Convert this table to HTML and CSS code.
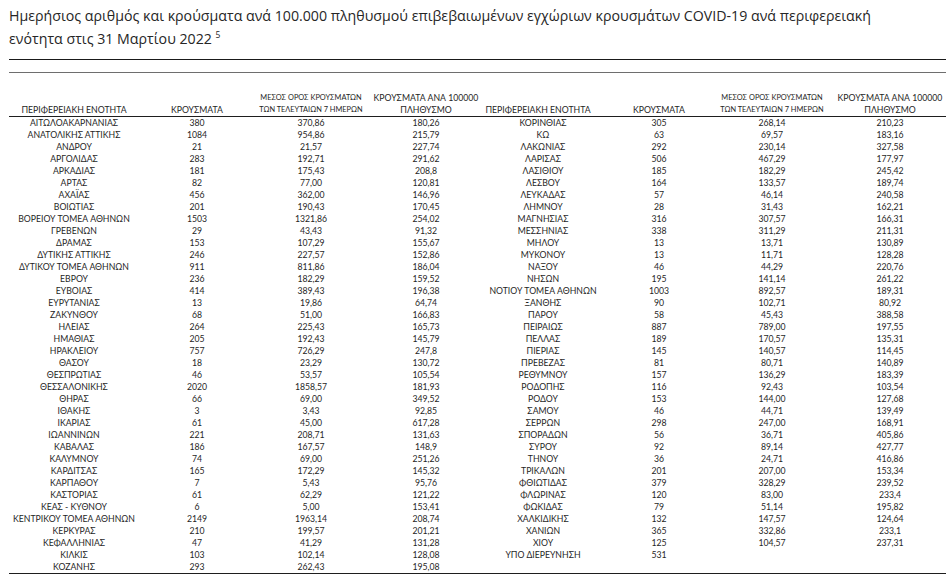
FILE: index.html
```html
<!DOCTYPE html>
<html lang="el">
<head>
<meta charset="utf-8">
<title>Κρούσματα ανά περιφερειακή ενότητα</title>
<link rel="stylesheet" href="styles.css">
</head>
<body>
<div class="page">
  <h1 class="title">Ημερήσιος αριθμός και κρούσματα ανά 100.000 πληθυσμού επιβεβαιωμένων εγχώριων κρουσμάτων COVID-19 ανά περιφερειακή<br>ενότητα στις 31 Μαρτίου 2022 <sup class="note">5</sup></h1>
  <div class="rule rule-dark"></div>
  <div class="rule rule-grey"></div>
  <table class="data">
    <colgroup>
      <col class="c1"><col class="c2"><col class="c3"><col class="c4">
      <col class="c5"><col class="c6"><col class="c7"><col class="c8">
    </colgroup>
    <thead>
      <tr>
        <th>ΠΕΡΙΦΕΡΕΙΑΚΗ ΕΝΟΤΗΤΑ</th>
        <th>ΚΡΟΥΣΜΑΤΑ</th>
        <th class="small">ΜΕΣΟΣ ΟΡΟΣ ΚΡΟΥΣΜΑΤΩΝ<br>ΤΩΝ ΤΕΛΕΥΤΑΙΩΝ 7 ΗΜΕΡΩΝ</th>
        <th>ΚΡΟΥΣΜΑΤΑ ΑΝΑ 100000<br>ΠΛΗΘΥΣΜΟ</th>
        <th class="name2">ΠΕΡΙΦΕΡΕΙΑΚΗ ΕΝΟΤΗΤΑ</th>
        <th>ΚΡΟΥΣΜΑΤΑ</th>
        <th class="small">ΜΕΣΟΣ ΟΡΟΣ ΚΡΟΥΣΜΑΤΩΝ<br>ΤΩΝ ΤΕΛΕΥΤΑΙΩΝ 7 ΗΜΕΡΩΝ</th>
        <th class="last">ΚΡΟΥΣΜΑΤΑ ΑΝΑ 100000<br>ΠΛΗΘΥΣΜΟ</th>
      </tr>
    </thead>
    <tbody>
      <tr><td>ΑΙΤΩΛΟΑΚΑΡΝΑΝΙΑΣ</td><td>380</td><td>370,86</td><td>180,26</td><td>ΚΟΡΙΝΘΙΑΣ</td><td>305</td><td>268,14</td><td class="last">210,23</td></tr>
      <tr><td>ΑΝΑΤΟΛΙΚΗΣ ΑΤΤΙΚΗΣ</td><td>1084</td><td>954,86</td><td>215,79</td><td>ΚΩ</td><td>63</td><td>69,57</td><td class="last">183,16</td></tr>
      <tr><td>ΑΝΔΡΟΥ</td><td>21</td><td>21,57</td><td>227,74</td><td>ΛΑΚΩΝΙΑΣ</td><td>292</td><td>230,14</td><td class="last">327,58</td></tr>
      <tr><td>ΑΡΓΟΛΙΔΑΣ</td><td>283</td><td>192,71</td><td>291,62</td><td>ΛΑΡΙΣΑΣ</td><td>506</td><td>467,29</td><td class="last">177,97</td></tr>
      <tr><td>ΑΡΚΑΔΙΑΣ</td><td>181</td><td>175,43</td><td>208,8</td><td>ΛΑΣΙΘΙΟΥ</td><td>185</td><td>182,29</td><td class="last">245,42</td></tr>
      <tr><td>ΑΡΤΑΣ</td><td>82</td><td>77,00</td><td>120,81</td><td>ΛΕΣΒΟΥ</td><td>164</td><td>133,57</td><td class="last">189,74</td></tr>
      <tr><td>ΑΧΑΪΑΣ</td><td>456</td><td>362,00</td><td>146,96</td><td>ΛΕΥΚΑΔΑΣ</td><td>57</td><td>46,14</td><td class="last">240,58</td></tr>
      <tr><td>ΒΟΙΩΤΙΑΣ</td><td>201</td><td>190,43</td><td>170,45</td><td>ΛΗΜΝΟΥ</td><td>28</td><td>31,43</td><td class="last">162,21</td></tr>
      <tr><td>ΒΟΡΕΙΟΥ ΤΟΜΕΑ ΑΘΗΝΩΝ</td><td>1503</td><td>1321,86</td><td>254,02</td><td>ΜΑΓΝΗΣΙΑΣ</td><td>316</td><td>307,57</td><td class="last">166,31</td></tr>
      <tr><td>ΓΡΕΒΕΝΩΝ</td><td>29</td><td>43,43</td><td>91,32</td><td>ΜΕΣΣΗΝΙΑΣ</td><td>338</td><td>311,29</td><td class="last">211,31</td></tr>
      <tr><td>ΔΡΑΜΑΣ</td><td>153</td><td>107,29</td><td>155,67</td><td>ΜΗΛΟΥ</td><td>13</td><td>13,71</td><td class="last">130,89</td></tr>
      <tr><td>ΔΥΤΙΚΗΣ ΑΤΤΙΚΗΣ</td><td>246</td><td>227,57</td><td>152,86</td><td>ΜΥΚΟΝΟΥ</td><td>13</td><td>11,71</td><td class="last">128,28</td></tr>
      <tr><td>ΔΥΤΙΚΟΥ ΤΟΜΕΑ ΑΘΗΝΩΝ</td><td>911</td><td>811,86</td><td>186,04</td><td>ΝΑΞΟΥ</td><td>46</td><td>44,29</td><td class="last">220,76</td></tr>
      <tr><td>ΕΒΡΟΥ</td><td>236</td><td>182,29</td><td>159,52</td><td>ΝΗΣΩΝ</td><td>195</td><td>141,14</td><td class="last">261,22</td></tr>
      <tr><td>ΕΥΒΟΙΑΣ</td><td>414</td><td>389,43</td><td>196,38</td><td>ΝΟΤΙΟΥ ΤΟΜΕΑ ΑΘΗΝΩΝ</td><td>1003</td><td>892,57</td><td class="last">189,31</td></tr>
      <tr><td>ΕΥΡΥΤΑΝΙΑΣ</td><td>13</td><td>19,86</td><td>64,74</td><td>ΞΑΝΘΗΣ</td><td>90</td><td>102,71</td><td class="last">80,92</td></tr>
      <tr><td>ΖΑΚΥΝΘΟΥ</td><td>68</td><td>51,00</td><td>166,83</td><td>ΠΑΡΟΥ</td><td>58</td><td>45,43</td><td class="last">388,58</td></tr>
      <tr><td>ΗΛΕΙΑΣ</td><td>264</td><td>225,43</td><td>165,73</td><td>ΠΕΙΡΑΙΩΣ</td><td>887</td><td>789,00</td><td class="last">197,55</td></tr>
      <tr><td>ΗΜΑΘΙΑΣ</td><td>205</td><td>192,43</td><td>145,79</td><td>ΠΕΛΛΑΣ</td><td>189</td><td>170,57</td><td class="last">135,31</td></tr>
      <tr><td>ΗΡΑΚΛΕΙΟΥ</td><td>757</td><td>726,29</td><td>247,8</td><td>ΠΙΕΡΙΑΣ</td><td>145</td><td>140,57</td><td class="last">114,45</td></tr>
      <tr><td>ΘΑΣΟΥ</td><td>18</td><td>23,29</td><td>130,72</td><td>ΠΡΕΒΕΖΑΣ</td><td>81</td><td>80,71</td><td class="last">140,89</td></tr>
      <tr><td>ΘΕΣΠΡΩΤΙΑΣ</td><td>46</td><td>53,57</td><td>105,54</td><td>ΡΕΘΥΜΝΟΥ</td><td>157</td><td>136,29</td><td class="last">183,39</td></tr>
      <tr><td>ΘΕΣΣΑΛΟΝΙΚΗΣ</td><td>2020</td><td>1858,57</td><td>181,93</td><td>ΡΟΔΟΠΗΣ</td><td>116</td><td>92,43</td><td class="last">103,54</td></tr>
      <tr><td>ΘΗΡΑΣ</td><td>66</td><td>69,00</td><td>349,52</td><td>ΡΟΔΟΥ</td><td>153</td><td>144,00</td><td class="last">127,68</td></tr>
      <tr><td>ΙΘΑΚΗΣ</td><td>3</td><td>3,43</td><td>92,85</td><td>ΣΑΜΟΥ</td><td>46</td><td>44,71</td><td class="last">139,49</td></tr>
      <tr><td>ΙΚΑΡΙΑΣ</td><td>61</td><td>45,00</td><td>617,28</td><td>ΣΕΡΡΩΝ</td><td>298</td><td>247,00</td><td class="last">168,91</td></tr>
      <tr><td>ΙΩΑΝΝΙΝΩΝ</td><td>221</td><td>208,71</td><td>131,63</td><td>ΣΠΟΡΑΔΩΝ</td><td>56</td><td>36,71</td><td class="last">405,86</td></tr>
      <tr><td>ΚΑΒΑΛΑΣ</td><td>186</td><td>167,57</td><td>148,9</td><td>ΣΥΡΟΥ</td><td>92</td><td>89,14</td><td class="last">427,77</td></tr>
      <tr><td>ΚΑΛΥΜΝΟΥ</td><td>74</td><td>69,00</td><td>251,26</td><td>ΤΗΝΟΥ</td><td>36</td><td>24,71</td><td class="last">416,86</td></tr>
      <tr><td>ΚΑΡΔΙΤΣΑΣ</td><td>165</td><td>172,29</td><td>145,32</td><td>ΤΡΙΚΑΛΩΝ</td><td>201</td><td>207,00</td><td class="last">153,34</td></tr>
      <tr><td>ΚΑΡΠΑΘΟΥ</td><td>7</td><td>5,43</td><td>95,76</td><td>ΦΘΙΩΤΙΔΑΣ</td><td>379</td><td>328,29</td><td class="last">239,52</td></tr>
      <tr><td>ΚΑΣΤΟΡΙΑΣ</td><td>61</td><td>62,29</td><td>121,22</td><td>ΦΛΩΡΙΝΑΣ</td><td>120</td><td>83,00</td><td class="last">233,4</td></tr>
      <tr><td>ΚΕΑΣ - ΚΥΘΝΟΥ</td><td>6</td><td>5,00</td><td>153,41</td><td>ΦΩΚΙΔΑΣ</td><td>79</td><td>51,14</td><td class="last">195,82</td></tr>
      <tr><td>ΚΕΝΤΡΙΚΟΥ ΤΟΜΕΑ ΑΘΗΝΩΝ</td><td>2149</td><td>1963,14</td><td>208,74</td><td>ΧΑΛΚΙΔΙΚΗΣ</td><td>132</td><td>147,57</td><td class="last">124,64</td></tr>
      <tr><td>ΚΕΡΚΥΡΑΣ</td><td>210</td><td>199,57</td><td>201,21</td><td>ΧΑΝΙΩΝ</td><td>365</td><td>332,86</td><td class="last">233,1</td></tr>
      <tr><td>ΚΕΦΑΛΛΗΝΙΑΣ</td><td>47</td><td>41,29</td><td>131,28</td><td>ΧΙΟΥ</td><td>125</td><td>104,57</td><td class="last">237,31</td></tr>
      <tr><td>ΚΙΛΚΙΣ</td><td>103</td><td>102,14</td><td>128,08</td><td>ΥΠΟ ΔΙΕΡΕΥΝΗΣΗ</td><td>531</td><td></td><td class="last"></td></tr>
      <tr><td>ΚΟΖΑΝΗΣ</td><td>293</td><td>262,43</td><td>195,08</td><td></td><td></td><td></td><td class="last"></td></tr>
    </tbody>
  </table>
</div>
</body>
</html>
```

FILE: styles.css
```css
html, body {
  margin: 0;
  padding: 0;
  background: #ffffff;
}

.page {
  padding: 4px 6px 0 9px;
  color: #222222;
}

.title {
  margin: 0;
  font-family: "Open Sans", "Noto Sans", sans-serif;
  font-size: 14.2px;
  font-weight: normal;
  line-height: 23px;
  color: #262626;
  white-space: nowrap;
}

.note {
  font-size: 8.5px;
  vertical-align: 6px;
  line-height: 0;
}

.rule {
  height: 1px;
  width: 937px;
}

.rule-dark {
  margin-top: 9px;
  background: #1a1a1a;
}

.rule-grey {
  margin-top: 12px;
  background: #6e6e6e;
}

.data {
  width: 937px;
  table-layout: fixed;
  border-collapse: collapse;
  font-family: "Lato", sans-serif;
  font-size: 8.7px;
  color: #1f1f1f;
}

.c1 { width: 130px; }
.c2 { width: 116px; }
.c3 { width: 112px; }
.c4 { width: 118px; }
.c5 { width: 116px; }
.c6 { width: 116px; }
.c7 { width: 110px; }
.c8 { width: 119px; }

.data th {
  height: 43px;
  padding: 0;
  vertical-align: bottom;
  text-align: center;
  font-weight: normal;
  line-height: 12px;
  white-space: nowrap;
  border-bottom: 1px solid #1e1e1e;
}

.data th.small {
  font-size: 7.4px;
}

.data th.name2 {
  padding-right: 10px;
}

.data td {
  height: 12px;
  padding: 0;
  text-align: center;
  line-height: 12px;
  white-space: nowrap;
}

.data .last {
  padding-left: 7px;
}

.data tbody tr:last-child td {
  border-bottom: 1px solid #1e1e1e;
}
```
